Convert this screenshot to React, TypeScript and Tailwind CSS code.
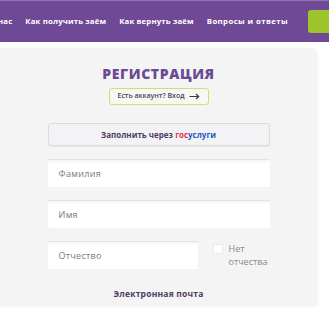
import React from "react";

const font = { fontFamily: '"Open Sans", "Noto Sans", sans-serif' };

export default function App() {
  return (
    <div className="w-[329px] h-[312px] bg-white overflow-hidden relative" style={font}>
      <div className="h-[42px] bg-[#6f4896] border-t border-[#8e72ad] flex items-center relative">
        <nav className="flex items-center text-white text-[7.8px] font-bold -ml-[2px] gap-[13px] tracking-[0.15px] pt-[1px]">
          <span>нас</span>
          <span>Как получить заём</span>
          <span>Как вернуть заём</span>
          <span className="tracking-[0.4px]">Вопросы и ответы</span>
        </nav>
        <div className="absolute left-[308px] top-[9px] w-[30px] h-[23px] rounded-[3px] bg-[#9cc42b]" />
      </div>
      <div className="mt-[6px] w-[317px] h-[257px] bg-[#f4f4f4] rounded-tr-[6px] rounded-br-[3px] shadow-[0_1px_4px_rgba(0,0,0,0.08)] flex flex-col items-center pt-[16px]">
        <h1 className="text-[14px] font-extrabold text-[#6a4a93] tracking-[0.6px] leading-[20px]">
          РЕГИСТРАЦИЯ
        </h1>
        <div className="mt-[4px] h-[17px] w-[100px] rounded-[3px] border-[1.5px] border-[#c8df86] bg-[#f8f8f3] flex items-center justify-center gap-[4px] text-[7px] font-semibold text-[#4b3c5e]">
          <span>Есть аккаунт? Вход</span>
          <svg width="11" height="7" viewBox="0 0 11 7" fill="none">
            <path d="M0.5 3.5H9.5M7 1L9.8 3.5L7 6" stroke="#3f3552" strokeWidth="1.1" />
          </svg>
        </div>
        <div className="mt-[18px] w-[222px] h-[23px] rounded-[3px] border border-[#dcdce0] bg-[#f3f3f6] shadow-[0_1px_1px_rgba(0,0,0,0.05)] flex items-center justify-center text-[8px] font-bold text-[#4d3a66]">
          <span>Заполнить через&nbsp;</span>
          <span className="text-[#e5314b]">гос</span>
          <span className="text-[#1a5bbf]">услуги</span>
        </div>
        <div className="mt-[13px] w-[222px] flex flex-col gap-[13px]">
          <div className="h-[28px] bg-white border-t border-[#e4e4e4] shadow-[inset_0_2px_2px_rgba(0,0,0,0.04)] flex items-center pl-[11px] text-[9px] text-[#7a7a7a] tracking-[0.3px]">
            Фамилия
          </div>
          <div className="h-[28px] bg-white border-t border-[#e4e4e4] shadow-[inset_0_2px_2px_rgba(0,0,0,0.04)] flex items-center pl-[11px] text-[9px] text-[#7a7a7a] tracking-[0.3px]">
            Имя
          </div>
          <div className="flex items-start">
            <div className="w-[150px] h-[28px] bg-white border-t border-[#e4e4e4] shadow-[inset_0_2px_2px_rgba(0,0,0,0.04)] flex items-center pl-[11px] text-[9px] text-[#7a7a7a] tracking-[0.3px]">
              Отчество
            </div>
            <div className="ml-[15px] mt-[3px] w-[10px] h-[10px] bg-white border border-[#ececec]" />
            <div className="ml-[6px] mt-[1px] text-[9px] leading-[13px] text-[#8a8a8a]">
              Нет
              <br />
              отчества
            </div>
          </div>
        </div>
        <div className="mt-[19px] text-[8.5px] font-bold text-[#4d3a66] tracking-[0.2px]">
          Электронная почта
        </div>
      </div>
    </div>
  );
}
